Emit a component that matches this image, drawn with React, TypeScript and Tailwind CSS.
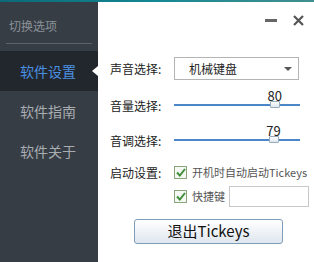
import type { ReactNode } from "react";

const font = { fontFamily: '"Noto Sans CJK SC", "Noto Sans", sans-serif' };

const navItems = ["软件设置", "软件指南", "软件关于"];

function Row({ label, children, className = "" }: { label: string; children: ReactNode; className?: string }) {
  return (
    <div className={`flex items-center ${className}`}>
      <span className="w-[64px] shrink-0 text-[12px] leading-none text-[#222]">{label}</span>
      {children}
    </div>
  );
}

function Slider({ value }: { value: number }) {
  return (
    <div className="relative h-[22px] w-[126px]">
      <div className="absolute left-0 right-0 top-[14px] h-[2px] bg-[#4a86c8]" />
      <div
        className="absolute top-[11px] h-[7px] w-[10px] -translate-x-1/2 rounded-[1px] border border-[#9ab] bg-gradient-to-b from-white to-[#dde6ee]"
        style={{ left: `${value}%` }}
      />
      <span
        className="absolute top-[-1px] -translate-x-1/2 text-[13px] leading-none text-[#222]"
        style={{ left: `${value}%` }}
      >
        {value}
      </span>
    </div>
  );
}

function Check() {
  return (
    <span className="flex h-[13px] w-[13px] shrink-0 items-center justify-center border border-[#8aa47e] bg-[#f4f7f2]">
      <svg width="10" height="9" viewBox="0 0 10 9">
        <path d="M1 4.5 L3.8 7.5 L9 1" fill="none" stroke="#3f8f3a" strokeWidth="2" />
      </svg>
    </span>
  );
}

export default function App() {
  return (
    <div style={font} className="flex h-[262px] w-[314px] flex-col overflow-hidden bg-white">
      <div className="h-[2px] bg-gradient-to-r from-[#0c6a78] via-[#138894] to-[#3f8f8f]" />
      <div className="flex flex-1">
        {/* sidebar */}
        <aside className="w-[98px] bg-[#363d45] pt-[16px]">
          <div className="pl-[9px] text-[12px] leading-[16px] text-[#8c9298]">切换选项</div>
          <div className="mx-[6px] mt-[9px] h-px bg-[#5c636b]" />
          <ul className="mt-[7px]">
            {navItems.map((item, i) => (
              <li
                key={item}
                className={`relative flex h-[40px] items-center pl-[20px] text-[14px] ${
                  i === 0 ? "bg-[#22272d] text-[#4a90e2]" : "text-[#a9adb2]"
                }`}
              >
                {item}
                {i === 0 && (
                  <span className="absolute right-0 top-[15px] h-0 w-0 border-y-[5px] border-r-[6px] border-y-transparent border-r-white" />
                )}
              </li>
            ))}
          </ul>
        </aside>

        {/* main */}
        <section className="flex-1 pl-[12px] pt-[11px]">
          <div className="flex h-[14px] items-center justify-end gap-[16px] pr-[10px]">
            <span className="h-[3px] w-[12px] bg-[#666]" />
            <svg width="11" height="11" viewBox="0 0 11 11">
              <path d="M1 1 L10 10 M10 1 L1 10" stroke="#555" strokeWidth="2.2" />
            </svg>
          </div>

          <Row label="声音选择:" className="mt-[30px]">
            <div className="flex h-[23px] w-[125px] items-center justify-between border border-[#b4b4b4] pl-[14px] pr-[6px] text-[12px] text-[#222]">
              机械键盘
              <span className="h-0 w-0 border-x-[4px] border-t-[4px] border-x-transparent border-t-[#555]" />
            </div>
          </Row>

          <Row label="音量选择:" className="mt-[10px] items-end">
            <Slider value={80} />
          </Row>

          <Row label="音调选择:" className="mt-[13px] items-end">
            <Slider value={79} />
          </Row>

          <div className="mt-[19px] flex items-center">
            <span className="w-[64px] text-[12px] leading-none text-[#222]">启动设置:</span>
            <Check />
            <span className="ml-[5px] text-[11px] leading-none text-[#555]">开机时自动启动Tickeys</span>
          </div>

          <div className="mt-[7px] flex items-center pl-[64px]">
            <Check />
            <span className="ml-[5px] text-[11px] leading-none text-[#555]">快捷键</span>
            <span className="ml-[4px] h-[21px] w-[80px] border border-[#c8c8c8] bg-white" />
          </div>

          <div className="mt-[12px] pl-[24px]">
            <button className="flex h-[25px] w-[149px] items-center justify-center rounded-[3px] border border-[#7f9db9] bg-gradient-to-b from-white to-[#dfe6ee] text-[15px] text-[#111]">
              退出Tickeys
            </button>
          </div>
        </section>
      </div>
    </div>
  );
}
